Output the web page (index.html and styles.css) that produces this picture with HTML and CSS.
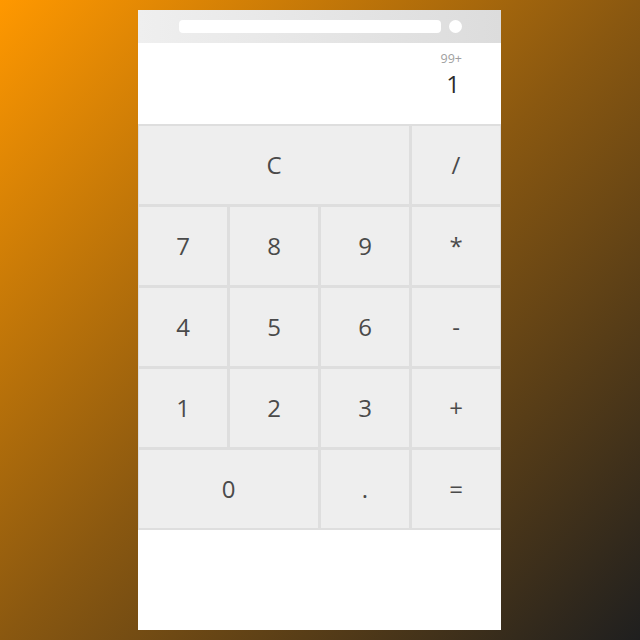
FILE: index.html
```html
<!DOCTYPE html>
<html>
<head>
<meta charset="utf-8">
<link rel="stylesheet" href="styles.css">
</head>
<body>
<div class="phone">
  <div class="topbar">
    <div class="address"></div>
    <div class="dot"></div>
  </div>
  <div class="display">
    <div class="history">99+</div>
    <div class="value">1</div>
  </div>
  <div class="keys">
    <div class="key wide3">C</div>
    <div class="key">/</div>
    <div class="key">7</div>
    <div class="key">8</div>
    <div class="key">9</div>
    <div class="key">*</div>
    <div class="key">4</div>
    <div class="key">5</div>
    <div class="key">6</div>
    <div class="key">-</div>
    <div class="key">1</div>
    <div class="key">2</div>
    <div class="key">3</div>
    <div class="key">+</div>
    <div class="key wide2">0</div>
    <div class="key">.</div>
    <div class="key">=</div>
  </div>
</div>
</body>
</html>
```
FILE: styles.css
```css
html, body {
  margin: 0;
  height: 100%;
}
body {
  background: linear-gradient(135deg, #ff9800 0%, #8a5810 50%, #1f1f1f 100%);
  font-family: "Open Sans", "Noto Sans", sans-serif;
  padding-top: 10px;
  box-sizing: border-box;
}
.phone {
  width: 363px;
  height: 620px;
  margin-left: 138px;
  background: #fff;
  display: flex;
  flex-direction: column;
}
.topbar {
  height: 33px;
  background: linear-gradient(90deg, #efefef, #dcdcdc);
  display: flex;
  align-items: center;
  padding-left: 41px;
  box-sizing: border-box;
}
.address {
  width: 262px;
  height: 13px;
  background: #fff;
  border-radius: 4px;
}
.dot {
  width: 13px;
  height: 13px;
  border-radius: 50%;
  background: #fff;
  margin-left: 8px;
}
.display {
  height: 81px;
  display: flex;
  flex-direction: column;
  align-items: flex-end;
  padding-right: 39px;
  box-sizing: border-box;
}
.history {
  font-size: 12.5px;
  color: #a0a0a0;
  margin-top: 8px;
  line-height: 16px;
}
.value {
  font-size: 24px;
  color: #2b2b2b;
  line-height: 32px;
  margin-top: 1px;
  margin-right: 2px;
}
.keys {
  display: grid;
  grid-template-columns: repeat(4, 1fr);
  grid-auto-rows: 78px;
  gap: 3px;
  padding: 2px 1px;
  background: #dedede;
}
.key {
  background: #eeeeee;
  display: flex;
  align-items: center;
  justify-content: center;
  font-size: 24px;
  color: #4a4a4a;
  padding-bottom: 2px;
  box-sizing: border-box;
}
.wide3 { grid-column: span 3; }
.wide2 { grid-column: span 2; }
```
